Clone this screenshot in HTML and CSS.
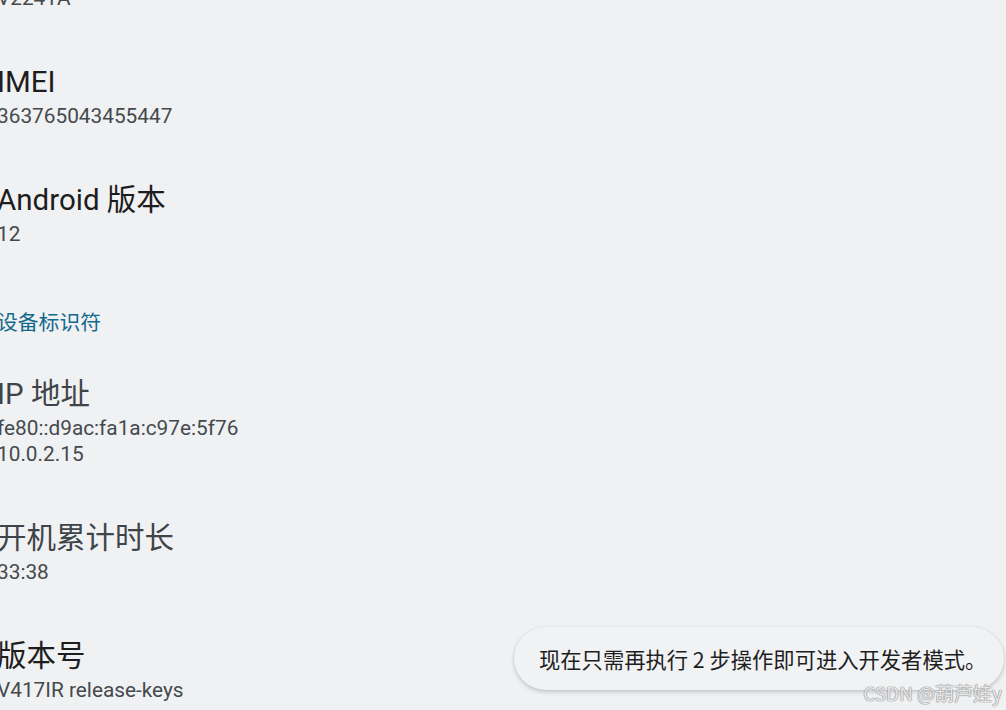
FILE: index.html
```html
<!DOCTYPE html>
<html lang="zh-CN">
<head>
<meta charset="utf-8">
<title>关于手机</title>
<link rel="stylesheet" href="styles.css">
</head>
<body>
<div class="screen">
  <div class="list">
    <div class="pref">
      <div class="title">型号</div>
      <div class="summary">V2241A</div>
    </div>
    <div class="pref">
      <div class="title">IMEI</div>
      <div class="summary">363765043455447</div>
    </div>
    <div class="pref">
      <div class="title">Android 版本</div>
      <div class="summary">12</div>
    </div>
    <div class="category">设备标识符</div>
    <div class="pref">
      <div class="title muted">IP 地址</div>
      <div class="summary">fe80::d9ac:fa1a:c97e:5f76<br>10.0.2.15</div>
    </div>
    <div class="pref">
      <div class="title muted">开机累计时长</div>
      <div class="summary">33:38</div>
    </div>
    <div class="pref">
      <div class="title">版本号</div>
      <div class="summary">V417IR release-keys</div>
    </div>
  </div>
  <div class="toast">现在只需再执行 2 步操作即可进入开发者模式。</div>
  <div class="watermark">CSDN @葫芦娃y</div>
</div>
</body>
</html>
```
FILE: styles.css
```css
html, body {
  margin: 0;
  padding: 0;
  background: #f0f1f3;
}
body {
  font-family: Roboto, "Noto Sans CJK SC", sans-serif;
}
.screen {
  position: relative;
  width: 1006px;
  height: 710px;
  overflow: hidden;
  background: #f0f1f3;
}
.list {
  margin-top: -79px;
  margin-left: -3px;
  display: flex;
  flex-direction: column;
}
.pref {
  padding: 26px 0 28px;
}
.title {
  font-size: 29.5px;
  line-height: 34px;
  color: #1d1d20;
}
.title.muted {
  color: #3f4448;
}
.summary {
  margin-top: 4px;
  font-size: 20.8px;
  line-height: 26px;
  color: #45494d;
}
.category {
  padding: 36px 0 16px;
  font-size: 20.8px;
  line-height: 24px;
  color: #13698c;
}
.toast {
  position: absolute;
  left: 514px;
  top: 627px;
  width: 490px;
  height: 63px;
  box-sizing: border-box;
  padding-left: 25px;
  display: flex;
  align-items: center;
  border-radius: 32px;
  background: #f1f2f4;
  box-shadow: 0 2px 4px rgba(0, 0, 0, 0.18), 0 0 2px rgba(0, 0, 0, 0.08);
  font-family: "Noto Sans CJK SC", Roboto, sans-serif;
  font-size: 21.3px;
  color: #1e1e21;
  white-space: nowrap;
}
.watermark {
  position: absolute;
  right: 4px;
  bottom: 6px;
  font-family: "Noto Sans CJK SC", sans-serif;
  font-size: 19px;
  line-height: 22px;
  color: rgba(255, 255, 255, 0.8);
  text-shadow: 0 0 1px #8e8e90, 0 0 1px #8e8e90, 0 0 1px #8e8e90;
}
```
